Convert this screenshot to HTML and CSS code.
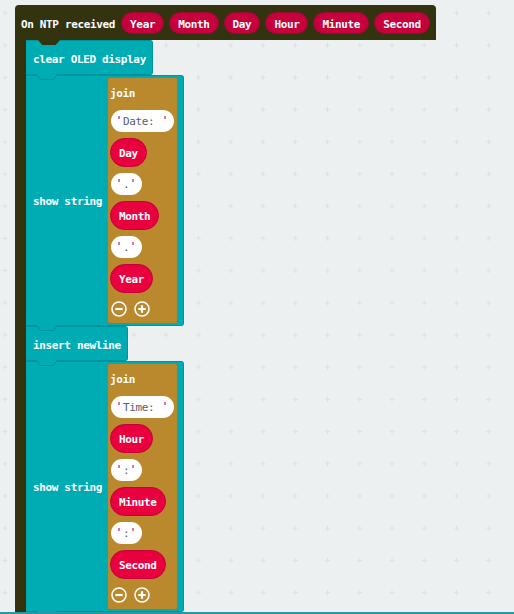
FILE: index.html
```html
<!DOCTYPE html>
<html lang="en">
<head>
    <meta charset="UTF-8">
    <meta name="viewport" content="width=device-width, initial-scale=1.0">
    <title>On NTP received</title>
    <link rel="stylesheet" href="styles.css">
</head>
<body>
    <svg class="grid" width="514" height="614">
        <defs>
            <pattern id="plus" x="-11.1" y="-3.1" width="32.25" height="32.2" patternUnits="userSpaceOnUse">
                <rect x="13.6" y="15.6" width="5" height="1" fill="#dce0e3"/>
                <rect x="15.6" y="13.6" width="1" height="5" fill="#dce0e3"/>
            </pattern>
        </defs>
        <rect width="514" height="614" fill="url(#plus)"/>
    </svg>

    <div class="hat">
        <div class="hat-head">
            <span class="label">On NTP received</span>
            <span class="var">Year</span>
            <span class="var">Month</span>
            <span class="var">Day</span>
            <span class="var">Hour</span>
            <span class="var">Minute</span>
            <span class="var">Second</span>
        </div>
        <div class="hat-body">
            <div class="arm"></div>
            <div class="stack">
                <div class="stmt simple">clear OLED display</div>

                <div class="stmt show">
                    <span class="label">show string</span>
                    <div class="join">
                        <span class="join-label">join</span>
                        <span class="str"><i class="q"></i><span class="txt">Date: </span><i class="q"></i></span>
                        <span class="var big">Day</span>
                        <span class="str"><i class="q"></i><span class="txt">.</span><i class="q"></i></span>
                        <span class="var big">Month</span>
                        <span class="str"><i class="q"></i><span class="txt">.</span><i class="q"></i></span>
                        <span class="var big">Year</span>
                        <div class="mutator">
                            <svg width="16" height="16" viewBox="0 0 16 16"><circle cx="8" cy="8" r="7" fill="none" stroke="#fff" stroke-width="1.6"/><path d="M4.3 8h7.4" stroke="#fff" stroke-width="2.2"/></svg>
                            <svg width="16" height="16" viewBox="0 0 16 16"><circle cx="8" cy="8" r="7" fill="none" stroke="#fff" stroke-width="1.6"/><path d="M4.3 8h7.4M8 4.3v7.4" stroke="#fff" stroke-width="2.2"/></svg>
                        </div>
                    </div>
                </div>

                <div class="stmt simple">insert newline</div>

                <div class="stmt show">
                    <span class="label">show string</span>
                    <div class="join">
                        <span class="join-label">join</span>
                        <span class="str"><i class="q"></i><span class="txt">Time: </span><i class="q"></i></span>
                        <span class="var big">Hour</span>
                        <span class="str"><i class="q"></i><span class="txt">:</span><i class="q"></i></span>
                        <span class="var big">Minute</span>
                        <span class="str"><i class="q"></i><span class="txt">:</span><i class="q"></i></span>
                        <span class="var big">Second</span>
                        <div class="mutator">
                            <svg width="16" height="16" viewBox="0 0 16 16"><circle cx="8" cy="8" r="7" fill="none" stroke="#fff" stroke-width="1.6"/><path d="M4.3 8h7.4" stroke="#fff" stroke-width="2.2"/></svg>
                            <svg width="16" height="16" viewBox="0 0 16 16"><circle cx="8" cy="8" r="7" fill="none" stroke="#fff" stroke-width="1.6"/><path d="M4.3 8h7.4M8 4.3v7.4" stroke="#fff" stroke-width="2.2"/></svg>
                        </div>
                    </div>
                </div>
            </div>
        </div>
    </div>

    <div class="edge"></div>
</body>
</html>
```

FILE: styles.css
```css
body {
    margin: 0;
    height: 614px;
    overflow: hidden;
    background-color: #ecf0f1;
    font-family: "DejaVu Sans Mono", "Liberation Mono", monospace;
    font-size: 11px;
    letter-spacing: -0.35px;
    font-weight: bold;
    color: #fff;
}
.grid {
    position: absolute;
    left: 0;
    top: 0;
    z-index: 0;
}
.hat {
    position: relative;
    display: inline-flex;
    flex-direction: column;
    margin: 5px 0 0 15px;
    z-index: 1;
}
.hat-head {
    position: relative;
    display: flex;
    align-items: center;
    gap: 5px;
    box-sizing: border-box;
    height: 35px;
    padding: 1px 6px 0;
    background-color: #33330f;
    border-radius: 4px 4px 0 0;
}
.hat-head .label {
    margin: 2px 1px 0 0;
}
.hat-head::after {
    content: "";
    position: absolute;
    left: 23px;
    top: 100%;
    width: 22px;
    height: 5px;
    background-color: #33330f;
    clip-path: polygon(0 0, 100% 0, 80% 100%, 20% 100%);
    z-index: 3;
}
.var {
    display: inline-flex;
    align-items: center;
    box-sizing: border-box;
    height: 22px;
    padding: 2px 8px 0;
    border: 1px solid #9c0a34;
    border-radius: 11px;
    background-color: #c5003c;
    white-space: nowrap;
}
.var.big {
    height: 29px;
    border-radius: 15px;
    background-color: #e9003f;
    border-color: #c4003a;
}
.hat-body {
    display: flex;
    height: 580px;
}
.arm {
    width: 11px;
    background-color: #33330f;
}
.stack {
    display: flex;
    flex-direction: column;
    align-items: flex-start;
}
.stmt {
    position: relative;
    box-sizing: border-box;
    background-color: #00acb4;
    border: 1px solid #00939b;
    border-left: none;
    border-radius: 0 3px 3px 0;
}
.stmt::before,
.stmt::after {
    content: "";
    position: absolute;
    top: 100%;
    clip-path: polygon(0 0, 100% 0, 80% 100%, 20% 100%);
    z-index: 3;
}
.stmt::before {
    left: 10px;
    width: 22px;
    height: 6px;
    background-color: #00939b;
}
.stmt::after {
    left: 11px;
    width: 20px;
    height: 5px;
    background-color: #00acb4;
}
.simple {
    display: flex;
    align-items: center;
    height: 35px;
    padding: 3px 6px 0 7px;
    white-space: nowrap;
}
.show {
    display: flex;
    align-items: center;
    padding: 1px 5px 1px 7px;
}
.show > .label {
    margin: 2px 5px 0 0;
    white-space: nowrap;
}
.join {
    display: flex;
    flex-direction: column;
    align-items: flex-start;
    gap: 6px;
    padding: 7px 3px 6px 2px;
    background-color: #ba892e;
    border: 1px solid #a3761f;
    border-radius: 3px;
}
.join-label {
    height: 15px;
    line-height: 17px;
    margin-bottom: 4px;
}
.str {
    display: inline-flex;
    align-items: center;
    gap: 3px;
    box-sizing: border-box;
    height: 22px;
    margin-left: 1px;
    padding: 1px 8px 0 7px;
    border-radius: 11px;
    background-color: #fff;
    color: #55606f;
    font-weight: normal;
}
.str .txt {
    white-space: pre;
}
.q {
    align-self: flex-start;
    width: 2px;
    height: 3px;
    margin-top: 5px;
    background: linear-gradient(to right, #e07aa4 50%, #8a90d8 50%);
}
.mutator {
    display: flex;
    gap: 7px;
    margin: 2px 0 0 1px;
}
.mutator svg {
    display: block;
}
.edge {
    position: fixed;
    left: 0;
    right: 0;
    bottom: 0;
    height: 2px;
    background-color: #2799a5;
    z-index: 5;
}
```
